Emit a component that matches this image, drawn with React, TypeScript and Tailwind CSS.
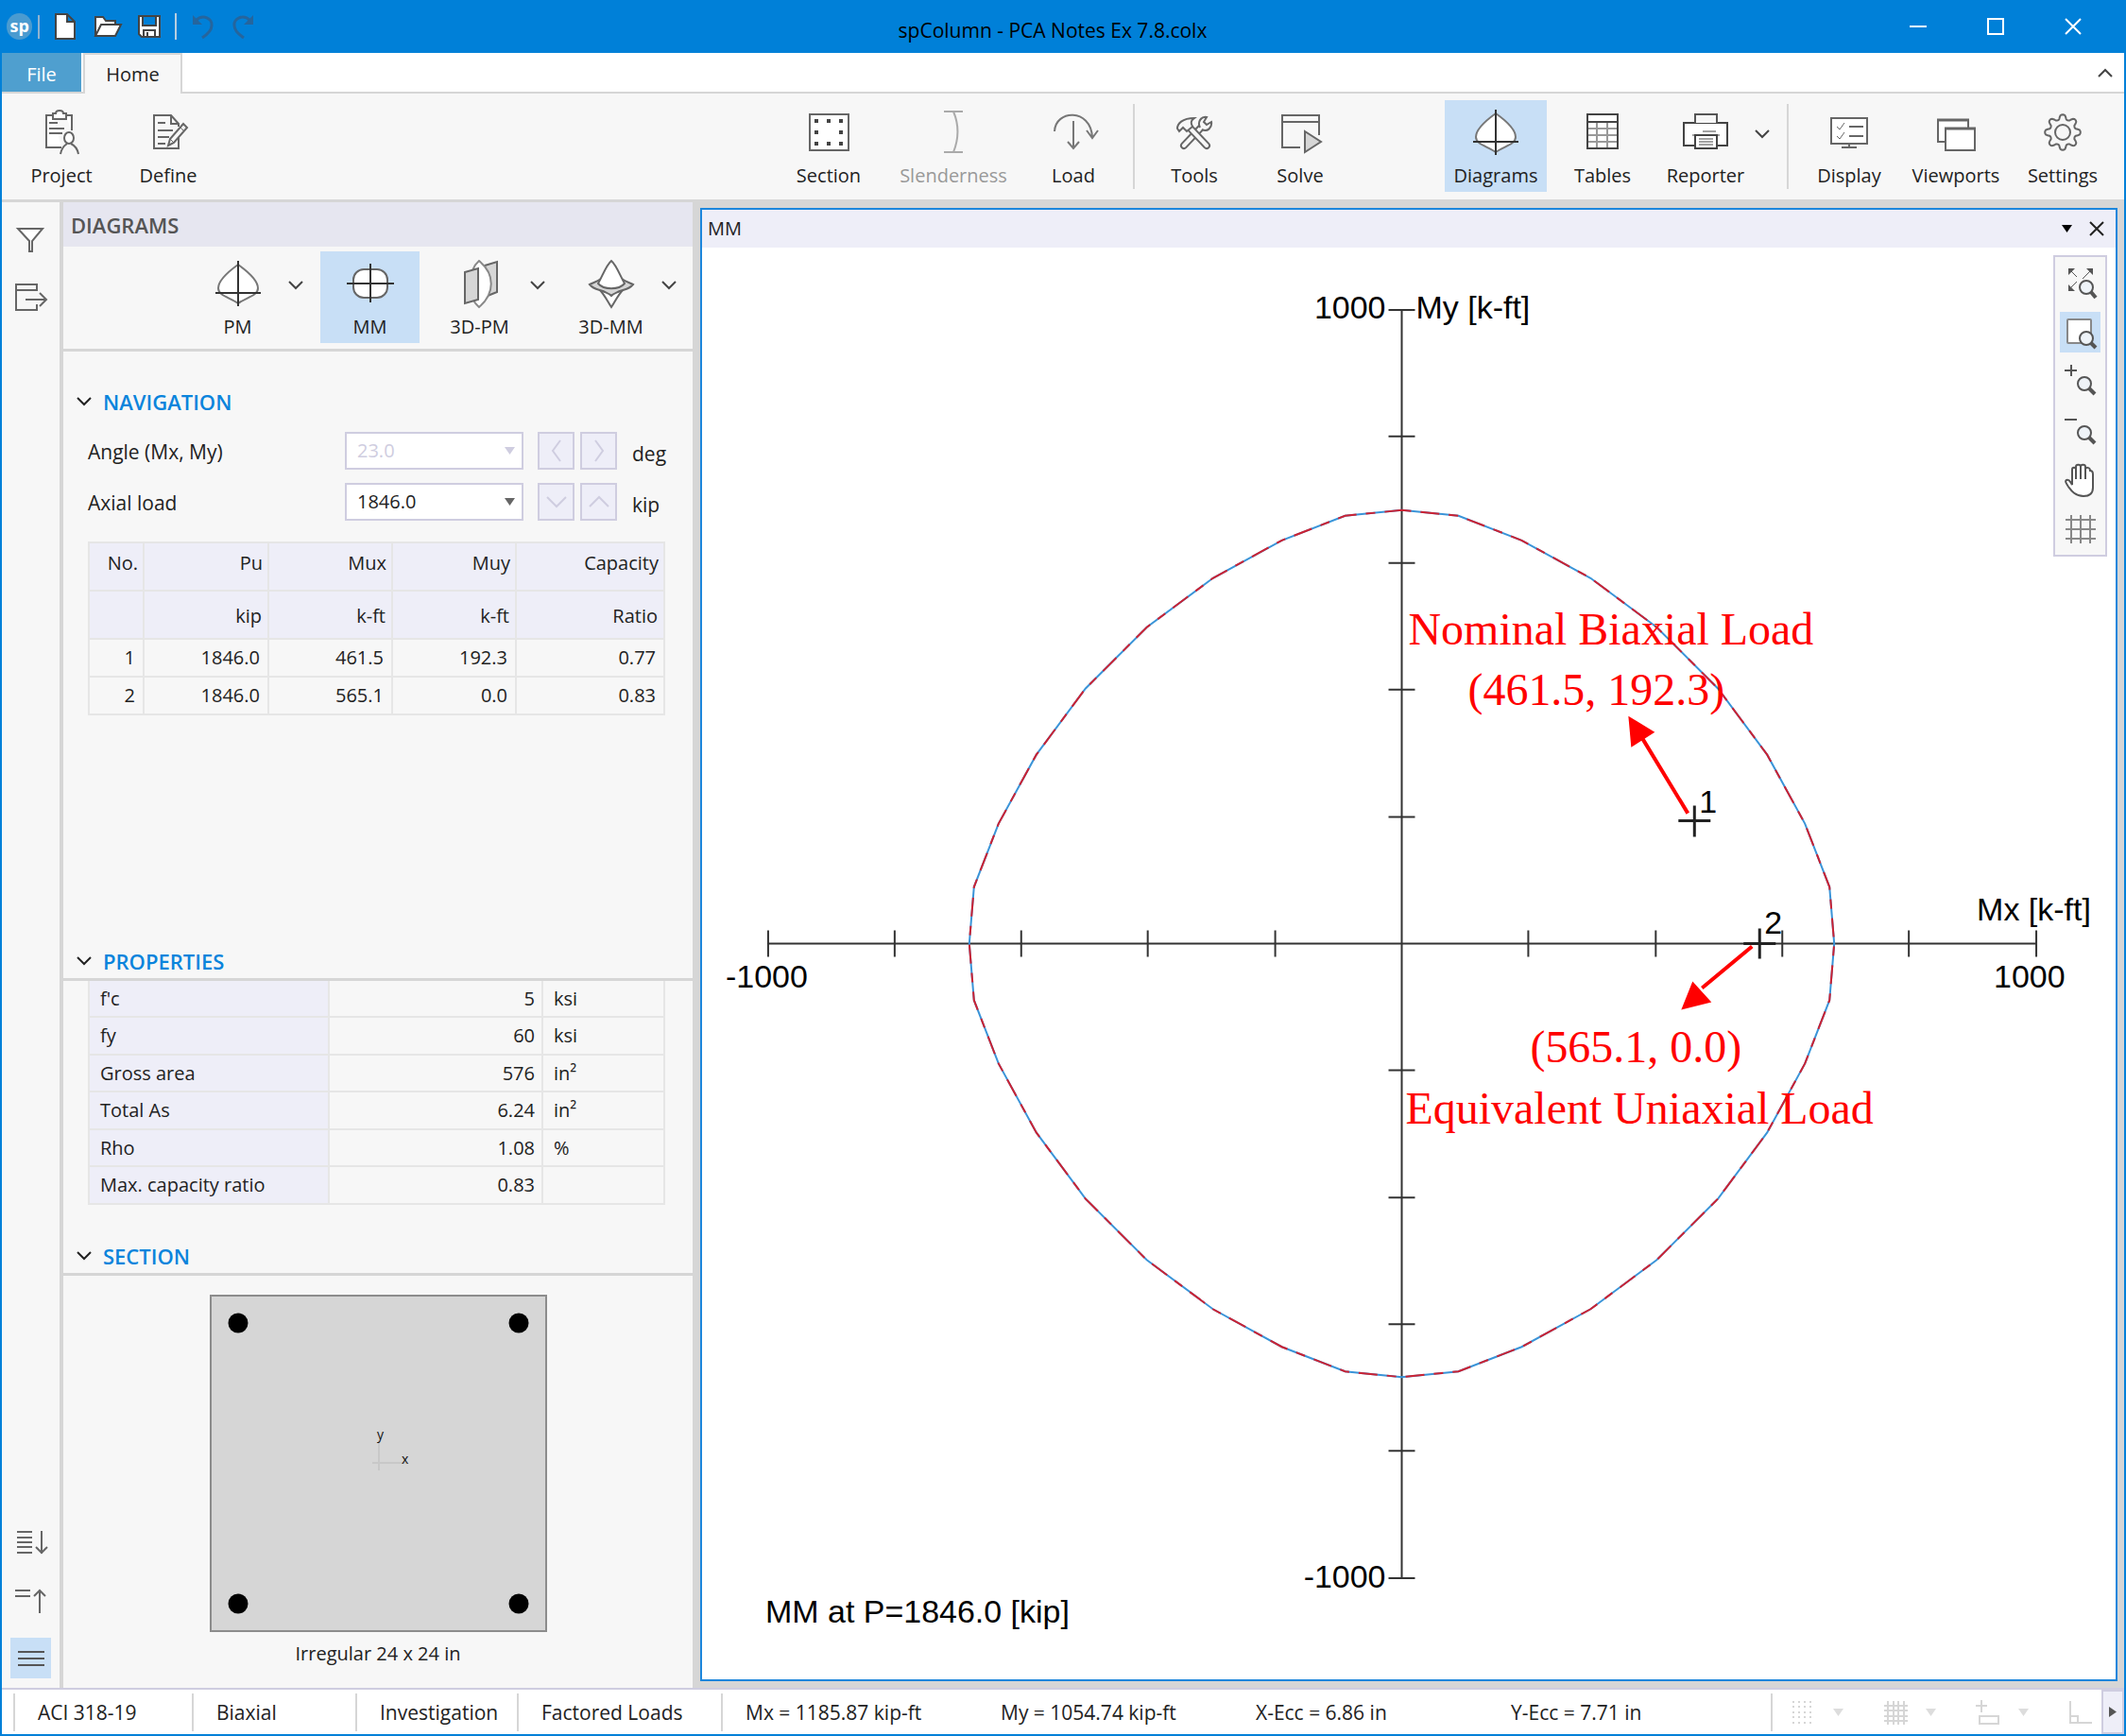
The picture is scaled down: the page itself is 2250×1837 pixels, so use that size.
import { useState } from "react";
import type { ReactNode } from "react";
import clsx from "clsx";

type IconProps = { children: ReactNode };

// 56px icon box shared by the ribbon and the diagram picker
function BigIcon({ children }: IconProps) {
  return (
    <svg width="56" height="56" viewBox="0 0 56 56" fill="none" stroke="#666666" strokeWidth="2" aria-hidden="true">
      {children}
    </svg>
  );
}

function SmallIcon({ children }: IconProps) {
  return (
    <svg width="36" height="36" viewBox="0 0 36 36" fill="none" stroke="#555555" strokeWidth="2" aria-hidden="true">
      {children}
    </svg>
  );
}

function Chevron({ up = false, color = "#444444" }: { up?: boolean; color?: string }) {
  return (
    <svg width="16" height="10" viewBox="0 0 16 10" fill="none" stroke={color} strokeWidth="2" aria-hidden="true">
      <path d={up ? "M1 9L8 2L15 9" : "M1 1L8 8L15 1"} />
    </svg>
  );
}

function Caret({ color = "#666666" }: { color?: string }) {
  return (
    <svg width="11" height="8" viewBox="0 0 11 8" fill={color} aria-hidden="true">
      <path d="M0 0H11L5.5 8Z" />
    </svg>
  );
}

const pmIcon = (
  <BigIcon>
    <path d="M28 8C35 13 49 24 49 33C49 41 36 43 28 49C20 43 7 41 7 33C7 24 21 13 28 8Z" fill="#fff" stroke="#777777" />
    <path d="M28 4V52M4 38H52" stroke="#333333" />
  </BigIcon>
);

const gearPath =
  Array.from({ length: 96 }, (_, i) => {
    const t = (i / 96) * Math.PI * 2;
    const wave = Math.cos(8 * t);
    const r = 16.2 + 2.6 * Math.sign(wave) * Math.sqrt(Math.abs(wave));
    return `${i ? "L" : "M"}${(28 + r * Math.sin(t)).toFixed(1)} ${(28 - r * Math.cos(t)).toFixed(1)}`;
  }).join("") + "Z";

const icons = {
  project: (
    <BigIcon>
      <path d="M19 10H12V44H28M32 10H39V26" fill="#fff" />
      <path d="M19 14V8H22C22 4 30 4 30 8H33V14Z" fill="#fff" />
      <path d="M15 18H24M15 24H31M15 29H29" />
      <ellipse cx="36" cy="34" rx="5" ry="6" fill="#fff" />
      <path d="M27 51C28 45 31 42 34 40M46 51C45 45 42 42 38 40" />
    </BigIcon>
  ),
  define: (
    <BigIcon>
      <path d="M39 30V45H13V10H31L39 19V22" />
      <path d="M31 10V19H39" />
      <path d="M17 18H25M17 26H33M17 33H29M17 40H25" />
      <path d="M28 42L30 35L44 19L48 23L34 39Z" fill="#f7f7f7" />
      <path d="M41 23L45 27M30 35L34 39" strokeWidth="1" />
    </BigIcon>
  ),
  section: (
    <BigIcon>
      <path d="M8 9H49V47H8Z" fill="#fff" />
      <g fill="#444444" stroke="none">
        {[15, 28, 41].flatMap((x) =>
          [16, 28, 40].map((y) => (x === 28 && y === 28 ? null : <rect key={`${x}-${y}`} x={x - 2} y={y - 2} width="4" height="4" />)),
        )}
      </g>
    </BigIcon>
  ),
  slenderness: (
    <BigIcon>
      <path d="M18 6H38M18 49H38M28 6C34 20 34 34 28 49" stroke="#aaaaaa" />
    </BigIcon>
  ),
  load: (
    <BigIcon>
      <path d="M8 27C9 4 46 2 48 33M42 26L48 34L54 26M28 16V45M22 38L28 45L34 38" stroke="#777777" />
    </BigIcon>
  ),
  tools: (
    <BigIcon>
      <path d="M17 42L36 22" strokeWidth="8" strokeLinecap="round" />
      <path d="M17 42L38 20" stroke="#f7f7f7" strokeWidth="4" strokeLinecap="round" />
      <path d="M34 23C31 17 35 11 41 12L38 17L41 20L46 17C47 23 42 28 36 25" fill="#f7f7f7" />
      <path d="M22 22L41 42" strokeWidth="8" strokeLinecap="round" />
      <path d="M22 22L41 42" stroke="#f7f7f7" strokeWidth="4" strokeLinecap="round" />
      <path d="M10 24C10 19 15 13 28 13C24 16 24 18 26 22L20 27L16 23L12 27Z" fill="#f7f7f7" />
    </BigIcon>
  ),
  solve: (
    <BigIcon>
      <path d="M28 44H9V10H48V31M9 17H48" />
      <path d="M33 27L50 38L33 49Z" fill="#d6d6d6" />
    </BigIcon>
  ),
  tables: (
    <BigIcon>
      <path d="M12 9H44V45H12Z" fill="#fff" stroke="none" />
      <path d="M22 17V45M33 17V45M12 24H44M12 31H44M12 38H44" stroke="#999999" />
      <path d="M12 9H44V45H12ZM12 17H44" stroke="#444444" />
    </BigIcon>
  ),
  reporter: (
    <BigIcon>
      <path d="M5 18H51V42H5Z" fill="#fff" stroke="#444444" />
      <path d="M17 18V9H40V18" fill="#f7f7f7" stroke="#555555" />
      <path d="M14 31H43M25 27H39" stroke="#444444" strokeWidth="1" />
      <path d="M17 31H40V45H17Z" fill="#fff" stroke="#444444" />
      <path d="M21 35H36M21 38H36M21 41H36" stroke="#444444" strokeWidth="1" />
    </BigIcon>
  ),
  display: (
    <BigIcon>
      <path d="M9 13H47V40H9Z" fill="#fff" />
      <path d="M28 22H43M28 32H43M28 40V44M20 44H36" />
      <path d="M15 22L18 25L23 18M15 32L18 35L23 28" strokeWidth="1" />
    </BigIcon>
  ),
  viewports: (
    <BigIcon>
      <path d="M9 15H41V38H9Z" fill="#fff" />
      <path d="M8 15H42" strokeWidth="3" />
      <path d="M17 24H48V47H17Z" fill="#fff" />
      <path d="M16 24H49" strokeWidth="3" />
    </BigIcon>
  ),
  settings: (
    <BigIcon>
      <path d={gearPath} />
      <circle cx="28" cy="28" r="8" />
    </BigIcon>
  ),
  mm: (
    <BigIcon>
      <rect x="10" y="13" width="36" height="30" rx="11" fill="#fff" />
      <path d="M28 7V48M3 28H53" stroke="#333333" />
    </BigIcon>
  ),
  pm3d: (
    <BigIcon>
      <path d="M33 9L46 5V37L36 41Z" fill="#d6d6d6" />
      <path d="M27 4C44 18 44 38 27 53C20 47 18 40 18 28C18 16 21 9 27 4Z" fill="#fff" stroke="#888888" />
      <path d="M12 16L26 12V45L12 49Z" fill="#d6d6d6" />
    </BigIcon>
  ),
  mm3d: (
    <BigIcon>
      <path d="M15 34C21 40 24 47 28 53C32 47 35 40 41 34Z" fill="#fff" />
      <path d="M5 29C9 27 13 26 17 23H39C43 26 47 27 51 29C46 35 41 34 37 36C33 38 30 39 28 41C26 39 23 38 19 36C15 34 10 35 5 29Z" fill="#d6d6d6" />
      <path d="M28 4C23 8 19 19 14 28C20 35 36 35 42 28C37 19 33 8 28 4Z" fill="#fff" />
    </BigIcon>
  ),
};

type ToolProps = { label: string; icon: ReactNode; width?: string; active?: boolean; disabled?: boolean; onClick?: () => void };

function ToolButton({ label, icon, width = "w-[108px]", active, disabled, onClick }: ToolProps) {
  return (
    <button
      type="button"
      disabled={disabled}
      onClick={onClick}
      className={clsx(
        "flex h-[97px] shrink-0 flex-col items-center pt-[6px]",
        width,
        active && "bg-[#c8dff6]",
        disabled && "text-[#999999]",
      )}
    >
      {icon}
      <span className="mt-1 leading-7 whitespace-nowrap">{label}</span>
    </button>
  );
}

function DropButton({ label }: { label: string }) {
  return (
    <button type="button" aria-label={label} className="flex h-[72px] w-5 shrink-0 items-center justify-center">
      <Chevron />
    </button>
  );
}

function TitleBar() {
  return (
    <header className="flex h-14 shrink-0 items-center bg-[#0080d8]">
      <div className="flex w-[280px] shrink-0 items-center pl-[7px]">
        <span className="mr-[6px] flex size-7 items-center justify-center rounded-full bg-[#4a9bd0] pb-[3px] text-[18px] leading-none font-bold text-white">sp</span>
        <span className="h-[25px] w-[2px] bg-[#8fb3cf]" />
        <button type="button" aria-label="New" className="ml-[5px] flex w-[45px] justify-center">
          <svg width="26" height="32" viewBox="0 0 26 32" fill="#fff" stroke="#444444" strokeWidth="2">
            <path d="M3 3H15L23 11V29H3ZM15 3V11H23" />
          </svg>
        </button>
        <button type="button" aria-label="Open" className="flex w-[45px] justify-center">
          <svg width="32" height="28" viewBox="0 0 32 28" fill="#fff" stroke="#444444" strokeWidth="2">
            <path d="M3 24V4H11L14 8H24V12" />
            <path d="M3 24L9 12H30L24 24Z" />
          </svg>
        </button>
        <button type="button" aria-label="Save" className="flex w-[45px] justify-center">
          <svg width="28" height="28" viewBox="0 0 28 28" fill="#fff" stroke="#444444" strokeWidth="2">
            <path d="M3 3H25V25H6L3 22ZM7 3V13H21V3M8 25V18H20V25M12 25V20" />
          </svg>
        </button>
        <span className="ml-[5px] h-[28px] w-[2px] bg-[#b8cfe0]" />
        <button type="button" aria-label="Undo" disabled className="ml-[5px] flex w-[45px] justify-center">
          <svg width="28" height="28" viewBox="0 0 28 28" fill="none" stroke="#25659d" strokeWidth="3">
            <path d="M7 8C15 0 25 6 24 13C24 18 20 22 14 26" />
            <path d="M4 2V12H14Z" fill="#25659d" stroke="none" />
          </svg>
        </button>
        <button type="button" aria-label="Redo" disabled className="flex w-[45px] justify-center">
          <svg width="28" height="28" viewBox="0 0 28 28" fill="none" stroke="#25659d" strokeWidth="3">
            <path d="M21 8C13 0 3 6 4 13C4 18 8 22 14 26" />
            <path d="M24 2V12H14Z" fill="#25659d" stroke="none" />
          </svg>
        </button>
      </div>
      <h1 className="flex-1 pt-2 text-center text-[21px] text-black">spColumn - PCA Notes Ex 7.8.colx</h1>
      <div className="flex w-[302px] shrink-0 justify-end pr-[15px]">
        {[
          ["Minimize", "M1 10H19"],
          ["Maximize", "M2 2H18V18H2Z"],
          ["Close", "M2 2L18 18M18 2L2 18"],
        ].map(([label, d]) => (
          <button key={label} type="button" aria-label={label} className="flex h-14 w-[82px] items-center justify-center">
            <svg width="20" height="20" viewBox="0 0 20 20" fill="none" stroke="#fff" strokeWidth="2"><path d={d} /></svg>
          </button>
        ))}
      </div>
    </header>
  );
}

function Ribbon() {
  return (
    <>
      <nav className="flex h-[43px] shrink-0 items-stretch border-b-2 border-[#d6d6d6] bg-white">
        <button type="button" className="w-[84px] bg-[#4f9fcf] pt-1 text-white">File</button>
        <button type="button" className="z-10 -mb-[2px] ml-[2px] w-[105px] border-2 border-b-0 border-[#d6d6d6] bg-[#f7f7f7]">Home</button>
        <button type="button" aria-label="Collapse ribbon" className="mr-3 ml-auto flex items-center"><Chevron up /></button>
      </nav>
      <div className="flex shrink-0 items-start border-b-[3px] border-[#d6d6d6] bg-[#f7f7f7] pt-[7px] pr-[11px] pb-2 pl-[9px]">
        <div className="flex flex-1 gap-[5px]">
          <ToolButton label="Project" icon={icons.project} />
          <ToolButton label="Define" icon={icons.define} />
        </div>
        <div className="mr-[90px] flex">
          <ToolButton label="Section" icon={icons.section} />
          <ToolButton label="Slenderness" icon={icons.slenderness} width="w-[156px]" disabled />
          <ToolButton label="Load" icon={icons.load} width="w-[98px]" />
          <span className="mx-[14px] mt-1 h-[90px] w-[2px] bg-[#d6d6d6]" />
          <ToolButton label="Tools" icon={icons.tools} width="w-[98px]" />
          <ToolButton label="Solve" icon={icons.solve} width="w-[126px]" />
        </div>
        <div className="flex">
          <ToolButton label="Diagrams" icon={pmIcon} active />
          <ToolButton label="Tables" icon={icons.tables} width="w-[118px]" />
          <ToolButton label="Reporter" icon={icons.reporter} width="w-[100px]" />
          <DropButton label="Reporter options" />
          <span className="mr-[10px] ml-4 mt-1 h-[90px] w-[2px] bg-[#d6d6d6]" />
          <ToolButton label="Display" icon={icons.display} />
          <ToolButton label="Viewports" icon={icons.viewports} width="w-[118px]" />
          <ToolButton label="Settings" icon={icons.settings} />
        </div>
      </div>
    </>
  );
}

function SideBar() {
  return (
    <aside className="flex w-[65px] shrink-0 flex-col items-center border-r-4 border-[#d6d6d6] bg-[#f7f7f7] pt-[18px] pb-[10px]">
      <button type="button" aria-label="Filter" className="flex size-[43px] items-center justify-center">
        <SmallIcon><path d="M4 6H30L19 19V30H16V19Z" fill="#fff" stroke="#666666" /></SmallIcon>
      </button>
      <button type="button" aria-label="Export" className="mt-[18px] flex size-[43px] items-center justify-center">
        <SmallIcon><path d="M24 11V4H2V31H24V25M2 10H24M12 20H33M27 13L34 20L27 27" stroke="#666666" /></SmallIcon>
      </button>
      <button type="button" aria-label="Expand list" className="mt-auto flex size-[43px] items-center justify-center">
        <SmallIcon><path d="M3 6H19M3 12H19M3 17H19M3 22H19M3 28H19M29 5V29M23 22L29 28L35 22" stroke="#666666" /></SmallIcon>
      </button>
      <button type="button" aria-label="Collapse list" className="mt-[18px] flex size-[43px] items-center justify-center">
        <SmallIcon><path d="M1 7H17M1 13H17M27 31V7M21 13L27 7L33 13" stroke="#666666" /></SmallIcon>
      </button>
      <button type="button" aria-label="Menu" className="mt-[18px] flex size-[43px] items-center justify-center bg-[#c8dff6]">
        <SmallIcon><path d="M4 11H32M4 18H32M4 25H32" stroke="#555555" /></SmallIcon>
      </button>
    </aside>
  );
}

function Heading({ title, ruled }: { title: string; ruled?: boolean }) {
  return (
    <h2 className={clsx("flex h-10 items-center pl-[14px] text-[22px] font-semibold text-[#0a84dc]", ruled && "border-b-[3px] border-[#d6d6d6]")}>
      <button type="button" className="flex items-center gap-3">
        <Chevron color="#222222" />
        {title}
      </button>
    </h2>
  );
}

type StepperProps = { id: string; label: string; value: string; unit: string; disabled?: boolean; arrows: [string, string] };

function Stepper({ id, label, value, unit, disabled, arrows }: StepperProps) {
  return (
    <div className="mb-[14px] flex h-10 items-center">
      <label htmlFor={id} className="flex-1 pt-[2px] text-[21px]">{label}</label>
      <div className="relative w-[189px]">
        <select
          id={id}
          disabled={disabled}
          className="block h-10 w-full appearance-none border-2 border-[#cfcde0] bg-white pl-[11px] opacity-100 disabled:text-[#cfcde0]"
        >
          <option>{value}</option>
        </select>
        <span className="pointer-events-none absolute top-4 right-[9px]"><Caret color={disabled ? "#cfcde0" : "#666666"} /></span>
      </div>
      <div className="ml-[15px] flex gap-[6px]">
        {arrows.map((d, i) => (
          <button key={d} type="button" disabled aria-label={`${label} ${i ? "up" : "down"}`} className="flex h-10 w-[39px] items-center justify-center border-2 border-[#cfcde0] bg-[#eeeef8]">
            <svg width="24" height="24" viewBox="0 0 24 24" fill="none" stroke="#cfcde0" strokeWidth="2"><path d={d} /></svg>
          </button>
        ))}
      </div>
      <span className="w-[51px] pt-[6px] pl-4 text-[21px]">{unit}</span>
    </div>
  );
}

const LOADS = [
  ["1", "1846.0", "461.5", "192.3", "0.77"],
  ["2", "1846.0", "565.1", "0.0", "0.83"],
];

const PROPERTIES: [string, string, ReactNode][] = [
  ["f'c", "5", "ksi"],
  ["fy", "60", "ksi"],
  ["Gross area", "576", "in²"],
  ["Total As", "6.24", "in²"],
  ["Rho", "1.08", "%"],
  ["Max. capacity ratio", "0.83", ""],
];

function SectionDrawing() {
  return (
    <svg width="357" height="357" viewBox="0 0 357 357" aria-label="Section">
      <rect x="1" y="1" width="355" height="355" fill="#d6d6d6" stroke="#8c8c8c" strokeWidth="2" />
      {[30, 327].flatMap((x) => [30, 327].map((y) => <circle key={`${x}-${y}`} cx={x} cy={y} r="10.5" />))}
      <path d="M172 178H208M179 154V186" stroke="#c8c8c8" strokeWidth="2" />
      <g fontFamily="Open Sans" fontSize="14" fill="#111">
        <text x="177" y="153">y</text>
        <text x="203" y="179">x</text>
      </g>
    </svg>
  );
}

function DiagramsPanel() {
  const [mode, setMode] = useState("MM");
  const cell = "border-2 border-[#e6e6e6]";

  return (
    <section className="flex w-[666px] shrink-0 flex-col bg-[#f7f7f7]">
      <h2 className="flex h-[47px] items-center bg-[#e6e6f0] pl-2 text-[22px] font-semibold text-[#555555]">DIAGRAMS</h2>
      <div className="flex h-[111px] items-start justify-end border-b-[3px] border-[#d6d6d6] pt-[5px] pr-[15px]">
        <ToolButton label="PM" icon={pmIcon} width="w-[103px]" active={mode === "PM"} onClick={() => setMode("PM")} />
        <DropButton label="PM options" />
        <span className="w-4" />
        <ToolButton label="MM" icon={icons.mm} width="w-[105px]" active={mode === "MM"} onClick={() => setMode("MM")} />
        <span className="w-3" />
        <ToolButton label="3D-PM" icon={icons.pm3d} width="w-[103px]" active={mode === "3D-PM"} onClick={() => setMode("3D-PM")} />
        <DropButton label="3D-PM options" />
        <span className="w-4" />
        <ToolButton label="3D-MM" icon={icons.mm3d} width="w-[103px]" active={mode === "3D-MM"} onClick={() => setMode("3D-MM")} />
        <DropButton label="3D-MM options" />
      </div>

      <div className="flex-1 pt-[33px]">
        <Heading title="NAVIGATION" />
        <div className="pt-3 pr-[29px] pl-[26px]">
          <Stepper id="angle" label="Angle (Mx, My)" value="23.0" unit="deg" disabled arrows={["M16 1L8 12L16 23", "M8 1L16 12L8 23"]} />
          <Stepper id="axial" label="Axial load" value="1846.0" unit="kip" arrows={["M2 7L12 17L22 7", "M2 17L12 7L22 17"]} />
          <table className="mt-[22px] w-full table-fixed border-collapse text-right">
            <colgroup>
              <col className="w-[58px]" />
              <col className="w-[132px]" />
              <col className="w-[131px]" />
              <col className="w-[131px]" />
              <col />
            </colgroup>
            <thead className="bg-[#eeeef8]">
              <tr className="h-[51px]">
                {["No.", "Pu", "Mux", "Muy", "Capacity"].map((h) => (
                  <th key={h} scope="col" className={clsx(cell, "pr-[5px] pb-2 font-normal")}>{h}</th>
                ))}
              </tr>
              <tr className="h-[51px]">
                {["", "kip", "k-ft", "k-ft", "Ratio"].map((h, i) => (
                  <th key={i} className={clsx(cell, "pt-[2px] pr-[6px] font-normal")}>{h}</th>
                ))}
              </tr>
            </thead>
            <tbody>
              {LOADS.map((row) => (
                <tr key={row[0]} className="h-10">
                  {row.map((v, i) => (
                    <td key={i} className={clsx(cell, "pr-2")}>{v}</td>
                  ))}
                </tr>
              ))}
            </tbody>
          </table>
        </div>
      </div>

      <Heading title="PROPERTIES" ruled />
      <div className="pr-[29px] pl-[26px]">
        <table className="h-[237px] w-full table-fixed border-collapse">
          <colgroup>
            <col className="w-[254px]" />
            <col className="w-[226px]" />
            <col />
          </colgroup>
          <tbody>
            {PROPERTIES.map(([name, value, unit]) => (
              <tr key={name}>
                <th scope="row" className={clsx(cell, "border-t-0 bg-[#eeeef8] pl-[11px] text-left font-normal")}>{name}</th>
                <td className={clsx(cell, "border-t-0 pr-[7px] text-right")}>{value}</td>
                <td className={clsx(cell, "border-t-0 pl-[11px]")}>{unit}</td>
              </tr>
            ))}
          </tbody>
        </table>
      </div>

      <div className="pt-[35px]">
        <Heading title="SECTION" ruled />
        <figure className="flex flex-col items-center pt-5 pb-[22px]">
          <SectionDrawing />
          <figcaption className="mt-[9px] leading-7">Irregular 24 x 24 in</figcaption>
        </figure>
      </div>
    </section>
  );
}

// first quadrant of the capacity contour, mirrored into the other three
const QUADRANT = [[0, 459], [60, 453], [127, 427], [200, 387], [270, 335], [335, 270], [387, 200], [427, 127], [453, 60], [458, 0]];
const CONTOUR = [
  ...QUADRANT.map(([x, y]) => [x, -y]),
  ...[...QUADRANT].reverse(),
  ...QUADRANT.map(([x, y]) => [-x, y]),
  ...[...QUADRANT].reverse().map(([x, y]) => [-x, -y]),
].map((p) => p.join(",")).join(" ");

const TICKS = [-5, -4, -3, -2, -1, 1, 2, 3, 4, 5].map((n) => Math.round(n * 134.3));

function Plot() {
  return (
    <svg className="h-full w-full" viewBox="-740 -737 1495 1516" aria-label="MM interaction diagram">
      <g stroke="#333333" strokeWidth="2">
        <path d="M-672 0H672M0 -672V672" />
        {TICKS.map((t) => (
          <path key={t} d={`M${t} -14V14M-14 ${t}H14`} />
        ))}
      </g>
      <polygon points={CONTOUR} fill="none" stroke="#3a94d8" strokeWidth="2" />
      <polygon points={CONTOUR} fill="none" stroke="#cc2233" strokeWidth="2" strokeDasharray="10 10 20 10" />
      <g stroke="#222222" strokeWidth="3">
        <path d="M293 -130H327M310 -146V-113M362 0H396M379 -16V16" />
      </g>
      <g fontFamily="Liberation Sans" fontSize="34" fill="#000">
        <text x="-17" y="-662" textAnchor="end">1000</text>
        <text x="15" y="-662">My [k-ft]</text>
        <text x="-17" y="682" textAnchor="end">-1000</text>
        <text x="-716" y="47">-1000</text>
        <text x="627" y="47">1000</text>
        <text x="609" y="-25">Mx [k-ft]</text>
        <text x="-674" y="719">MM at P=1846.0 [kip]</text>
        <text x="315" y="-139">1</text>
        <text x="384" y="-11">2</text>
      </g>
      <g fontFamily="Liberation Serif" fontSize="48" fill="#ff0000">
        <text x="7" y="-317">Nominal Biaxial Load</text>
        <text x="70" y="-253">(461.5, 192.3)</text>
        <text x="136" y="126">(565.1, 0.0)</text>
        <text x="4" y="191">Equivalent Uniaxial Load</text>
      </g>
      <g stroke="#ff0000" strokeWidth="4" fill="#ff0000">
        <path d="M303 -138L255 -217M371 3L318 47" />
        <path d="M240 -241L268 -224L243 -208ZM296 70L308 40L328 62Z" stroke="none" />
      </g>
    </svg>
  );
}

const lens = (
  <>
    <circle cx="22" cy="20" r="7" fill="#eef3f8" />
    <path d="M27 25L33 31" strokeWidth="4" />
  </>
);

const VIEW_TOOLS: [string, ReactNode][] = [
  ["Zoom extents", <><path d="M7 4L14 11M29 4L20 13M7 23L14 16" strokeWidth="1" /><path d="M5 2H12L5 9ZM31 2H24L31 9ZM5 26H12L5 19Z" fill="#555555" stroke="none" /><circle cx="24" cy="22" r="7" fill="#eef3f8" /><path d="M29 27L34 33" strokeWidth="4" /></>],
  ["Zoom window", <><rect x="4" y="4" width="25" height="25" rx="1" fill="#fff" stroke="#888888" /><circle cx="24" cy="24" r="7" fill="#eef3f8" /><path d="M29 29L34 34" strokeWidth="4" /></>],
  ["Zoom in", <><path d="M1 6H14M8 0V12" />{lens}</>],
  ["Zoom out", <><path d="M1 6H14" />{lens}</>],
  ["Pan", <path d="M9 23V7C9 4 13 4 13 7V17V4C13 1 18 1 18 4V17V4C18 1 23 1 23 4V17V7C23 4 28 4 28 8C30 8 31 9 31 12V26C31 32 27 35 21 35C12 35 8 29 5 25C3 22 1 19 3 18C5 17 7 19 9 23Z" fill="#fff" />],
  ["Grid", <path d="M8 3V33M18 3V33M28 3V33M2 8H34M2 18H34M2 28H34" stroke="#888888" />],
];

function Viewport() {
  return (
    <section className="mt-[6px] mr-[7px] mb-[7px] ml-[8px] flex min-w-0 flex-1 flex-col border-2 border-[#1c86dc] bg-white">
      <div className="flex h-10 shrink-0 items-center bg-[#eeeef8] pr-3 pl-[6px]">
        <h2 className="flex-1">MM</h2>
        <button type="button" aria-label="Viewport menu" className="mr-[18px]"><Caret color="#000000" /></button>
        <button type="button" aria-label="Close viewport">
          <svg width="16" height="16" viewBox="0 0 16 16" fill="none" stroke="#222" strokeWidth="2"><path d="M1 1L15 15M15 1L1 15" /></svg>
        </button>
      </div>
      <div className="relative min-h-0 flex-1">
        <Plot />
        <div className="absolute top-2 right-[9px] flex flex-col gap-[9px] border-2 border-[#cfcde0] bg-[#f7f7f7] px-[5px] py-[6px]">
          {VIEW_TOOLS.map(([label, icon], i) => (
            <button key={label} type="button" aria-label={label} className={clsx("flex size-[43px] items-center justify-center", i === 1 && "bg-[#c8dff6]")}>
              <SmallIcon>{icon}</SmallIcon>
            </button>
          ))}
        </div>
      </div>
    </section>
  );
}

const SNAP_ICONS: [string, ReactNode][] = [
  ["Snap", <path d="M7 7H31M7 12H31M7 18H31M7 23H31M7 29H31" strokeDasharray="2 4" />],
  ["Grid", <path d="M10 6V31M16 6V31M21 6V31M27 6V31M6 11H31M6 16H31M6 22H31M6 27H31" />],
  ["Insert", <path d="M5 11H17M11 5V18M9 22H29V30H9Z" />],
  ["Ortho", <path d="M7 6V29H30M7 22H15V29" />],
];

function StatusBar() {
  const cell = "flex h-10 items-center border-l-2 border-[#d6d6d6] pl-6 whitespace-nowrap";
  return (
    <footer className="flex h-[49px] shrink-0 items-center border-t-2 border-[#cfcde0] bg-white pl-3 text-[21px]">
      <span className={clsx(cell, "w-[189px]")}>ACI 318-19</span>
      <span className={clsx(cell, "w-[173px]")}>Biaxial</span>
      <span className={clsx(cell, "w-[171px]")}>Investigation</span>
      <span className={clsx(cell, "w-[216px]")}>Factored Loads</span>
      <div className={clsx(cell, "flex-1")}>
        <span className="w-[270px]">Mx = 1185.87 kip-ft</span>
        <span className="w-[270px]">My = 1054.74 kip-ft</span>
        <span className="w-[270px]">X-Ecc = 6.86 in</span>
        <span>Y-Ecc = 7.71 in</span>
      </div>
      <div className="flex h-10 items-center border-l-2 border-[#d6d6d6] pl-[14px]">
        {SNAP_ICONS.map(([label, icon], i) => (
          <button key={label} type="button" disabled aria-label={label} className={clsx("flex items-center", i < 3 ? "w-[98px] gap-[14px]" : "w-[40px]")}>
            <svg width="36" height="36" viewBox="0 0 36 36" fill="none" stroke="#d6d6d6" strokeWidth="2">{icon}</svg>
            {i < 3 && <Caret color="#dddddd" />}
          </button>
        ))}
      </div>
      <button type="button" aria-label="More" className="flex h-full w-6 items-center justify-center border-2 border-[#cfcde0] bg-[#eeeef8]">
        <svg width="8" height="11" viewBox="0 0 8 11" fill="#555"><path d="M0 0L8 5.5L0 11Z" /></svg>
      </button>
    </footer>
  );
}

export default function App() {
  return (
    <div className="flex h-screen flex-col bg-[#0080d8] font-['Open_Sans',sans-serif] text-[20px] leading-7 text-[#222222]">
      <TitleBar />
      <div className="mx-[2px] mb-[2px] flex min-h-0 flex-1 flex-col bg-[#d6d6d6]">
        <Ribbon />
        <main className="flex min-h-0 flex-1">
          <SideBar />
          <DiagramsPanel />
          <Viewport />
        </main>
        <StatusBar />
      </div>
    </div>
  );
}
